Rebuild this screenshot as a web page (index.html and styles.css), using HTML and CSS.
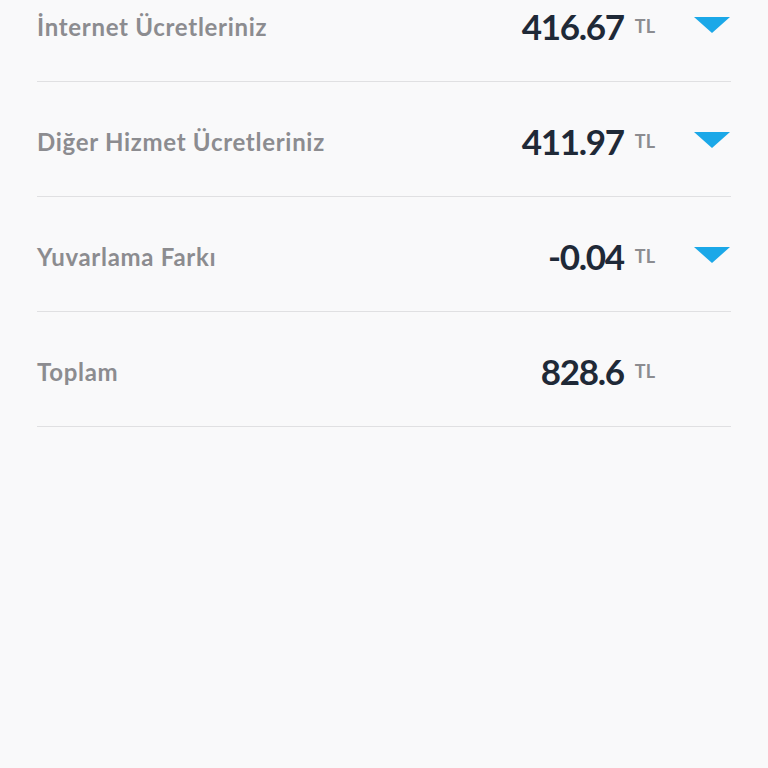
FILE: index.html
```html
<!DOCTYPE html>
<html lang="tr">
<head>
    <meta charset="UTF-8">
    <meta name="viewport" content="width=device-width, initial-scale=1.0">
    <title>Fatura Detayı</title>
    <link rel="stylesheet" href="styles.css">
</head>
<body>
    <div class="bill">
        <div class="row">
            <span class="label">İnternet Ücretleriniz</span>
            <span class="amount"><span class="value">416.67</span><span class="unit">TL</span></span>
            <span class="toggle"><span class="arrow"></span></span>
        </div>
        <div class="row">
            <span class="label">Diğer Hizmet Ücretleriniz</span>
            <span class="amount"><span class="value">411.97</span><span class="unit">TL</span></span>
            <span class="toggle"><span class="arrow"></span></span>
        </div>
        <div class="row">
            <span class="label">Yuvarlama Farkı</span>
            <span class="amount"><span class="value">-0.04</span><span class="unit">TL</span></span>
            <span class="toggle"><span class="arrow"></span></span>
        </div>
        <div class="row">
            <span class="label">Toplam</span>
            <span class="amount"><span class="value">828.6</span><span class="unit">TL</span></span>
            <span class="toggle"></span>
        </div>
    </div>
</body>
</html>
```

FILE: styles.css
```css
body {
    font-family: Lato, "Open Sans", sans-serif;
    background-color: #f9f9fa;
    margin: 0;
}
.bill {
    margin-top: -33px;
    padding: 0 37px;
}
.row {
    display: flex;
    align-items: center;
    box-sizing: border-box;
    height: 115px;
    padding-top: 5px;
    border-bottom: 1px solid #e0e0e2;
}
.label {
    flex: 1;
    font-size: 24px;
    font-weight: 700;
    letter-spacing: 0.7px;
    color: #8c8c90;
}
.amount {
    display: flex;
    align-items: flex-start;
}
.value {
    font-size: 35px;
    font-weight: 700;
    letter-spacing: -1.3px;
    color: #1f2937;
    line-height: 1;
}
.unit {
    margin-left: 11px;
    margin-top: 8px;
    font-size: 18px;
    font-weight: 700;
    color: #8c8c90;
    line-height: 1;
}
.toggle {
    width: 37px;
    height: 16px;
    margin-left: 39px;
    margin-top: -4px;
}
.arrow {
    display: block;
    width: 0;
    height: 0;
    border-left: 18.5px solid transparent;
    border-right: 18.5px solid transparent;
    border-top: 16px solid #1ba8e8;
}
```
